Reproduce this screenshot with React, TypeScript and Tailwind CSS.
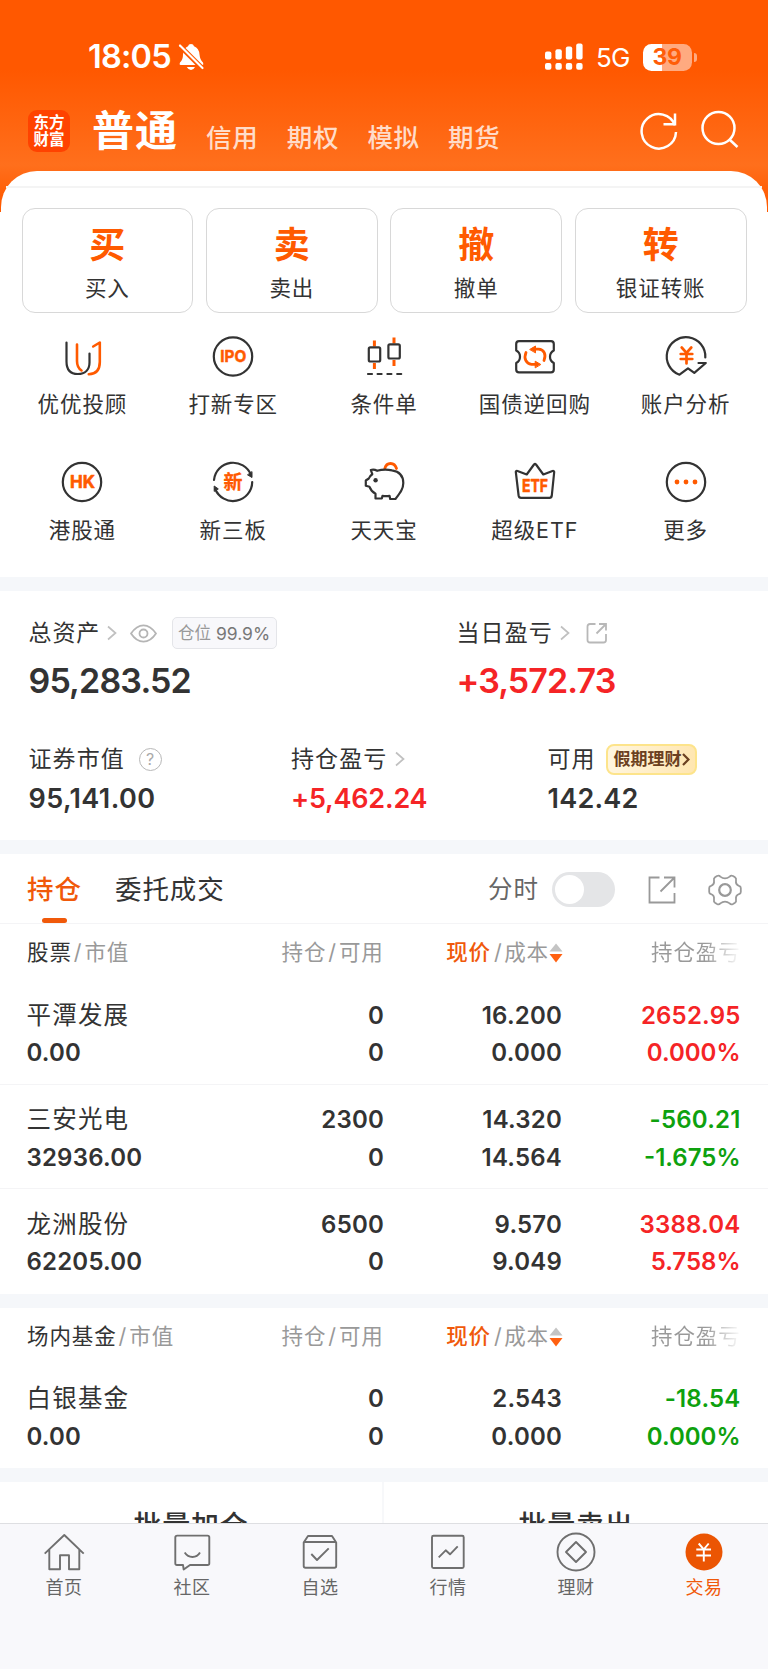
import type { ReactNode } from 'react';
import { clsx } from 'clsx';

const ACTIONS = [
  { mark: '买', name: '买入' },
  { mark: '卖', name: '卖出' },
  { mark: '撤', name: '撤单' },
  { mark: '转', name: '银证转账' },
];

const STOCKS = [
  { name: '平潭发展', value: '0.00', hold: '0', usable: '0', price: '16.200', cost: '0.000', profit: '2652.95', rate: '0.000%', up: true },
  { name: '三安光电', value: '32936.00', hold: '2300', usable: '0', price: '14.320', cost: '14.564', profit: '-560.21', rate: '-1.675%', up: false },
  { name: '龙洲股份', value: '62205.00', hold: '6500', usable: '0', price: '9.570', cost: '9.049', profit: '3388.04', rate: '5.758%', up: true },
];

const FUNDS = [
  { name: '白银基金', value: '0.00', hold: '0', usable: '0', price: '2.543', cost: '0.000', profit: '-18.54', rate: '0.000%', up: false },
];

type Holding = (typeof STOCKS)[number];

function Icon({ children }: { children: ReactNode }) {
  return (
    <svg className="shrink-0" width="48" height="48" viewBox="0 0 48 48" fill="none" stroke="#333" strokeWidth="2.2" strokeLinecap="round" strokeLinejoin="round">
      {children}
    </svg>
  );
}

const SHORTCUTS = [
  {
    name: '优优投顾',
    icon: (
      <Icon>
        <path d="M8.5 10.5V29.5C8.5 37.5 12.5 42 19.8 42S31.5 37.5 31.5 30.5V21.5" />
        <path stroke="#ff5a00" strokeWidth="2.6" d="M19 12.5V29C19 33.5 20.5 36.5 23.5 38.5M35.2 14.5L41.8 10.5V30C41.8 38 37.5 42 30.8 42.3" />
      </Icon>
    ),
  },
  {
    name: '打新专区',
    icon: (
      <Icon>
        <circle cx="24" cy="24.5" r="19.2" />
        <text x="24.2" y="30.4" fill="#ff5a00" stroke="#ff5a00" strokeWidth="0.5" fontSize="16.5" fontWeight="700" textAnchor="middle" textLength="26" lengthAdjust="spacingAndGlyphs">IPO</text>
      </Icon>
    ),
  },
  {
    name: '条件单',
    icon: (
      <Icon>
        <path stroke="#ff5a00" strokeWidth="3" strokeLinecap="butt" d="M14.4 8.5V14.5M14.4 31V37M34 5.5V11.5M34 28V34" />
        <rect x="8.8" y="15.3" width="11.4" height="14.2" rx="1.5" />
        <rect x="28.4" y="12.3" width="11.4" height="14.2" rx="1.5" />
        <path d="M8 42H12M17.6 42H21.6M27.4 42H31.4M37.2 42H41.2" />
      </Icon>
    ),
  },
  {
    name: '国债逆回购',
    icon: (
      <Icon>
        <path d="M8 9.2H40Q42.8 9.2 42.8 12V18.5Q39 20.5 39 24.7T42.8 31V37.5Q42.8 40.3 40 40.3H8Q5.2 40.3 5.2 37.5V31Q9 29 9 24.7T5.2 18.5V12Q5.2 9.2 8 9.2Z" />
        <path stroke="#ff5a00" strokeWidth="2.8" d="M15 20.5C12.5 26.5 15 31.800 20.500 32.300H26M33 28.500C35.500 22.500 33 17.500 27.500 17.200H22" />
        <path fill="#ff5a00" stroke="#ff5a00" strokeWidth="1" d="M19 17.300L24.500 14V20.500ZM29.500 32.300L24.200 29.200V35.500Z" />
      </Icon>
    ),
  },
  {
    name: '账户分析',
    icon: (
      <Icon>
        <path d="M43.300 25.500A19.300 19.300 0 1 0 17.500 42.700L26 36.300L32.300 40.800L43.800 31H36.500" />
        <path stroke="#ff5a00" strokeWidth="2.700" d="M19.700 15.500L24.500 20.800L29.300 15.500M18.700 22H30.300M18.700 27H30.300M24.500 21V31.500" />
      </Icon>
    ),
  },
  {
    name: '港股通',
    icon: (
      <Icon>
        <circle cx="24" cy="24" r="19.200" />
        <text x="24.500" y="30.300" fill="#ff5a00" stroke="#ff5a00" strokeWidth="0.600" fontSize="17.500" fontWeight="700" textAnchor="middle" textLength="25" lengthAdjust="spacingAndGlyphs">HK</text>
      </Icon>
    ),
  },
  {
    name: '新三板',
    icon: (
      <Icon>
        <path d="M5 22A19.200 19.200 0 0 1 42 17M43.200 24A19.200 19.200 0 0 1 6.200 31" />
        <path fill="#333" strokeWidth="1" d="M43 14V19.500L38.800 17ZM5.200 33V28L9 30.700Z" />
        <text x="24" y="30.500" fill="#ff5a00" stroke="#ff5a00" strokeWidth="0.300" fontSize="19" fontWeight="700" textAnchor="middle">新</text>
      </Icon>
    ),
  },
  {
    name: '天天宝',
    icon: (
      <Icon>
        <path stroke="#ff5a00" strokeWidth="2.800" d="M24.800 10.500C26.500 3.800 34.500 3.800 36.500 10.500" />
        <path d="M5.800 22.500L8.800 20.500Q9.500 18 12.300 16.200L10.800 12Q13.800 10.800 17.200 12.800Q24 10.800 32 12.300C39.500 13.500 43.300 18.500 43.300 25C43.300 31 40 35 35.500 41H30.200L29.500 37.800Q26 38.300 22.500 37.800L21.800 40.500H15.500V35.800Q11 33 9.500 28.800L5.800 27.800Z" />
        <circle cx="15.600" cy="22.200" r="2.200" fill="#333" stroke="none" />
      </Icon>
    ),
  },
  {
    name: '超级ETF',
    icon: (
      <Icon>
        <path d="M4.800 13.800Q5.200 12.500 6.500 13L15.700 16.500L23 6.500Q24 5.500 25 6.500L32.300 16.500L41.500 13Q43.200 12.700 43.200 14L40.800 37.500Q40.500 39.800 38.500 39.800H10Q8 39.800 7.600 37.500Z" />
        <text x="24" y="33.700" fill="#ff5a00" stroke="#ff5a00" strokeWidth="0.600" fontSize="17.500" fontWeight="700" textAnchor="middle" textLength="26" lengthAdjust="spacingAndGlyphs">ETF</text>
      </Icon>
    ),
  },
  {
    name: '更多',
    icon: (
      <Icon>
        <circle cx="24" cy="24" r="19.200" />
        <g fill="#ff5a00" stroke="none">
          <circle cx="15" cy="24" r="2.400" />
          <circle cx="24" cy="24" r="2.400" />
          <circle cx="33" cy="24" r="2.400" />
        </g>
      </Icon>
    ),
  },
];

const NAV = [
  { name: '首页', icon: <path d="M2.700 23.600L22.300 5L41.700 23.600M7.300 19.600V39.300H18V25.300H27V39.300H37.300V19.600" /> },
  { name: '社区', icon: <path d="M7.300 5.600H37.500Q39.300 5.600 39.300 7.400V33.200Q39.300 35 37.500 35H20L13.700 39.500L13 35H7Q5.300 35 5.300 33.200V7.400Q5.300 5.600 7.300 5.600ZM14.700 22.600C18.500 28.500 26.500 28.500 30 22.600" /> },
  { name: '自选', icon: <path d="M5.700 12.500L10 6H34L38.200 12.500V36Q38.200 37.700 36.500 37.700H7.500Q5.700 37.700 5.700 36ZM6 12H38M13.300 24L19 30L30.700 18.300" /> },
  { name: '行情', icon: <path d="M7.500 5.700H36.200Q37.700 5.700 37.700 7.200V36.500Q37.700 38 36.200 38H7.500Q6 38 6 36.500V7.200Q6 5.700 7.500 5.700ZM12.700 27.300L19.700 20.300L24 24.300L31.700 16.300" /> },
  { name: '理财', icon: <path d="M40.500 22A18.500 18.500 0 1 1 3.500 22A18.500 18.500 0 1 1 40.500 22ZM22 12L32 22L22 32L12 22Z" /> },
  {
    name: '交易',
    active: true,
    icon: (
      <>
        <circle cx="22" cy="22" r="18.500" fill="#eb5503" stroke="none" />
        <path stroke="#fff" d="M16.700 13.500L21.800 19.300L26.700 13.500M14.300 19.500H29M14.300 25.500H29M21.800 19.500V31.500" />
      </>
    ),
  },
];

function Chevron() {
  return (
    <svg width="10" height="16" viewBox="0 0 10 16" fill="none" stroke="#c0c0c0" strokeWidth="1.700">
      <path d="M1 1.500L8.500 8L1 14.500" />
    </svg>
  );
}

function StatusBar() {
  return (
    <div className="flex h-[58px] items-center">
      <span className="ml-[88px] w-[89px] whitespace-nowrap pt-px text-[32.500px] font-semibold leading-none tracking-[-0.800px]">18:05</span>
      <svg className="ml-px" width="27" height="28" viewBox="0 0 27 28">
        <path fill="#fff" d="M13 1Q15.500 1 16 3.200Q21 5 21.500 11.500Q22 17 25 19.500Q26 21.500 24.500 22H2.500Q0.800 21.500 2 19.500Q5 17 5 11.500Q5.500 5 10 3.200Q10.500 1 13 1ZM8.800 24H17Q15.500 27 13 27T8.800 24Z" />
        <path stroke="#ff5800" strokeWidth="5" d="M0 1L26 27" />
        <path stroke="#fff" strokeWidth="2.200" strokeLinecap="round" d="M2 2.500L24.500 25" />
      </svg>
      <svg className="ml-[340px]" width="38" height="28" viewBox="0 0 38 28" fill="#fff">
        <rect x="0" y="8.500" width="6.400" height="8" rx="2" />
        <rect x="10.400" y="6.300" width="6.400" height="10.200" rx="2" />
        <rect x="20.800" y="3.500" width="6.400" height="13" rx="2" />
        <rect x="31.200" y="0.500" width="6.400" height="16" rx="2" />
        <rect x="0" y="20" width="6.400" height="6.800" rx="2" />
        <rect x="10.400" y="20" width="6.400" height="6.800" rx="2" />
        <rect x="20.800" y="20" width="6.400" height="6.800" rx="2" />
        <rect x="31.200" y="20" width="6.400" height="6.800" rx="2" />
      </svg>
      <span className="ml-[13px] w-[35px] pt-[2px] text-[26px] leading-none tracking-[-0.700px]">5G</span>
      <div className="ml-[12px] flex h-[27px] w-[49px] items-center justify-center rounded-[8.500px] bg-[linear-gradient(90deg,#fff_39%,#ffaa80_39%)] pr-px text-[23px] font-bold leading-none tracking-[-0.500px] text-[#ff5d08]">
        39
      </div>
      <div className="ml-[2px] h-[9px] w-[3px] rounded-r-full bg-[#ffaa80]" />
    </div>
  );
}

function Header() {
  return (
    <header className="h-[212px] shrink-0 bg-[linear-gradient(180deg,#ff5800_0px,#ff5800_70px,#ff6f1c_165px,#ff5a00_203px)] pt-[28px] text-white">
      <StatusBar />
      <div className="flex h-[86px] items-center">
        <div className="relative top-[2px] ml-[28px] flex h-[42px] w-[42px] flex-col justify-center rounded-[9px] bg-[#ff4200] text-center text-[15.500px] font-bold leading-[17px]">
          <span>东方</span>
          <span>财富</span>
        </div>
        <span className="ml-[22px] w-[88px] whitespace-nowrap pt-[3px] text-[42px] font-bold leading-none tracking-[1px]">普通</span>
        <div className="ml-[26px] flex gap-[28.300px] pt-[17px] text-[25.500px] font-medium leading-none tracking-[0.700px] text-[#ffdcc9]">
          <span>信用</span>
          <span>期权</span>
          <span>模拟</span>
          <span>期货</span>
        </div>
        <svg className="ml-auto mr-[28px]" width="102" height="44" viewBox="0 0 102 44" fill="none" stroke="#fff" strokeWidth="2.500">
          <path d="M37 18.500A17.200 17.200 0 1 0 38 25M37 6.500V17.200H25.500" />
          <circle cx="80.500" cy="21" r="16" />
          <path d="M92 33L99.500 40" />
        </svg>
      </div>
    </header>
  );
}

function TableHead({ title }: { title: string }) {
  return (
    <div className="grid h-[56px] shrink-0 grid-cols-[180px_176px_207px_1fr] items-center pr-[27px] pt-[2px] text-[21.500px] leading-none tracking-[0.900px] text-[#999]">
      <div className="whitespace-nowrap pl-[27px]">
        <span className="text-[#333]">{title}</span>
        <span className="mx-[2px]">/</span>市值
      </div>
      <div className="whitespace-nowrap pl-[101.500px]">持仓<span className="mx-[2px]">/</span>可用</div>
      <div className="flex items-center justify-end whitespace-nowrap">
        <span className="font-medium text-[#f0590a]">现价</span>
        <span className="ml-[3px] mr-[1.500px]">/</span>成本
        <svg width="14" height="20" viewBox="0 0 14 20">
          <path fill="#c4c4c4" d="M7 0.500L13.500 8.500H0.500Z" />
          <path fill="#ff6010" d="M7 19.500L0.500 11H13.500Z" />
        </svg>
      </div>
      <div className="ml-auto w-[90px] overflow-hidden whitespace-nowrap bg-[linear-gradient(90deg,#999_60%,#99999910_98%)] bg-clip-text py-1 text-transparent">持仓盈亏</div>
    </div>
  );
}

function Row({ item, last }: { item: Holding; last: boolean }) {
  return (
    <div className={clsx('grid h-[104.500px] shrink-0 grid-cols-[200px_184px_178px_1fr] pr-[27.500px] pt-[16.500px] text-right text-[24px] font-semibold leading-[37.500px] tracking-[0.200px] text-[#333]', !last && 'border-b border-[#f4f4f6]')}>
      <div className="pl-[26.500px] text-left">
        <div className="text-[24.500px] font-normal tracking-[1.200px]">{item.name}</div>
        <div>{item.value}</div>
      </div>
      <div>
        <div>{item.hold}</div>
        <div>{item.usable}</div>
      </div>
      <div>
        <div>{item.price}</div>
        <div>{item.cost}</div>
      </div>
      <div className={item.up ? 'text-[#f52426]' : 'text-[#0ea10e]'}>
        <div>{item.profit}</div>
        <div className="tracking-normal">{item.rate}</div>
      </div>
    </div>
  );
}

function Assets() {
  return (
    <section className="h-[249px] shrink-0 whitespace-nowrap pl-[28.500px] text-[#333]">
      <div className="grid h-[117px] grid-cols-[428px_1fr] pt-[24px]">
        <div>
          <div className="flex h-[36px] items-center text-[23px] leading-none tracking-[0.900px]">
            <span className="w-[78px]">总资产</span>
            <Chevron />
            <svg className="ml-[13px]" width="27" height="19" viewBox="0 0 27 19" fill="none" stroke="#b5b5b5" strokeWidth="1.800">
              <path d="M1 9.500Q6.500 1.300 13.500 1.300T26 9.500Q20.500 17.700 13.500 17.700T1 9.500Z" />
              <circle cx="13.500" cy="9.500" r="4" />
            </svg>
            <div className="ml-[15px] flex h-[32px] w-[105px] items-center justify-center gap-[5px] rounded-[5px] border border-[#e4e5e9] bg-[#f8f8fb] pt-px text-[17.500px] tracking-normal">
              <span className="text-[16.500px] text-[#999]">仓位</span>
              <span className="text-[#777]">99.9%</span>
            </div>
          </div>
          <div className="mt-[11px] text-[34px] font-semibold leading-[38px] tracking-[-0.850px]">95,283.52</div>
        </div>
        <div>
          <div className="flex h-[36px] items-center text-[23px] leading-none tracking-[1.100px]">
            <span className="w-[103px]">当日盈亏</span>
            <Chevron />
            <svg className="ml-[16px]" width="22" height="22" viewBox="0 0 22 22" fill="none" stroke="#b8b8b8" strokeWidth="1.800">
              <path d="M9.500 2H4Q1.500 2 1.500 4.500V18Q1.500 20.500 4 20.500H17.500Q20 20.500 20 18V12M13 2H20V8.500M20 2L10.500 11.500" />
            </svg>
          </div>
          <div className="mt-[11px] text-[34px] font-semibold leading-[38px] tracking-[-0.900px] text-[#f52426]">+3,572.73</div>
        </div>
      </div>
      <div className="grid grid-cols-[262.500px_256.500px_1fr] pt-[33px] text-[23px] leading-none tracking-[1.100px]">
        <div>
          <div className="flex h-[36px] items-center">
            <span className="w-[110px]">证券市值</span>
            <span className="flex h-[23px] w-[23px] items-center justify-center rounded-full border-[1.500px] border-[#b8b8b8] text-[16px] tracking-normal text-[#aaa]">?</span>
          </div>
          <div className="mt-[5.500px] text-[27px] font-semibold leading-[32px] tracking-[0.400px]">95,141.00</div>
        </div>
        <div>
          <div className="flex h-[36px] items-center">
            <span className="w-[103.500px]">持仓盈亏</span>
            <Chevron />
          </div>
          <div className="mt-[5.500px] text-[27px] font-semibold leading-[32px] tracking-[-0.200px] text-[#f52426]">+5,462.24</div>
        </div>
        <div>
          <div className="flex h-[36px] items-center">
            <span className="w-[58.500px]">可用</span>
            <div className="flex h-[31px] w-[91px] items-center justify-center rounded-[8px] border-2 border-[#fde48b] bg-[linear-gradient(100deg,#fff6e0,#ffe6b0)] text-[17px] font-bold tracking-normal text-[#6b4020]">
              假期理财
              <svg width="8" height="13" viewBox="0 0 8 13" fill="none" stroke="#6b4020" strokeWidth="2.200">
                <path d="M1 1L6.500 6.500L1 12" />
              </svg>
            </div>
          </div>
          <div className="mt-[5.500px] text-[27px] font-semibold leading-[32px] tracking-[0.250px]">142.42</div>
        </div>
      </div>
    </section>
  );
}

export default function App() {
  return (
    <div className="flex h-[1669px] w-[768px] flex-col overflow-hidden bg-white font-[Inter,'Noto_Sans_CJK_SC',sans-serif] text-[#333]">
      <Header />

      <section className="relative mx-px -mt-[41px] h-[406px] shrink-0 rounded-t-[36px] bg-white pt-[15px]">
        <div className="mx-[5px] h-[2px] bg-[#f4f4f4]" />
        <div className="grid grid-cols-4 gap-[12.700px] px-[20.500px] pt-[20px]">
          {ACTIONS.map((action) => (
            <button key={action.mark} className="flex h-[105px] flex-col items-center rounded-[13px] border border-[#d8d8d8] pt-[17.500px] leading-none">
              <span className="text-[36px] font-bold leading-[36px] text-[#ff5a00]">{action.mark}</span>
              <span className="mt-[13px] text-[21.500px] leading-[24px] tracking-[0.900px]">{action.name}</span>
            </button>
          ))}
        </div>
        <div className="grid grid-cols-5 gap-y-[41px] px-[6px] pt-[19px]">
          {SHORTCUTS.map((item) => (
            <div key={item.name} className="flex h-[85px] flex-col items-center whitespace-nowrap">
              {item.icon}
              <span className="mt-[12px] text-[21.500px] leading-[24px] tracking-[0.900px]">{item.name}</span>
            </div>
          ))}
        </div>
      </section>

      <div className="h-[14px] shrink-0 bg-[#f5f7fa]" />
      <Assets />
      <div className="h-[14px] shrink-0 bg-[#f5f7fa]" />

      {/* Holdings tabs */}
      <div className="flex h-[70px] shrink-0 items-center border-b border-[#f4f4f6] pl-[27px] pt-[2px] text-[26.500px] leading-none tracking-[0.900px]">
        <div className="relative flex h-full w-[88px] items-center font-medium text-[#f0590a]">
          持仓
          <div className="absolute bottom-0 left-[15px] h-[5px] w-[25px] rounded-full bg-[#f0590a]" />
        </div>
        <span className="w-[373px]">委托成交</span>
        <span className="w-[64px] text-[24.500px] text-[#666]">分时</span>
        <div className="flex h-[35px] w-[63px] items-center rounded-full bg-[#e4e5e7] pl-[3px]">
          <div className="h-[29px] w-[29px] rounded-full bg-white" />
        </div>
        <svg className="ml-[32px]" width="30" height="30" viewBox="0 0 30 30" fill="none" stroke="#999" strokeWidth="1.800">
          <path d="M12.500 2.500H2.500V27.500H27.500V18M17 2.500H27.500V12.500M27 3L13.500 16.500" />
        </svg>
        <svg className="ml-[31px]" width="34" height="34" viewBox="0 0 34 34" fill="none" stroke="#999" strokeWidth="1.800" strokeLinejoin="round">
          <path d="M9 3Q11 2 12.300 3.600Q17 7.200 21.700 3.600Q23 2 25 3L27 4.200Q28.500 5.200 28 7.500C27.600 10.500 28.500 12 31 12.800Q32.800 13.300 32.800 15V19Q32.800 20.700 31 21.200C28.500 22 27.600 23.500 28 26.500Q28.500 28.800 27 29.800L25 31Q23 32 21.700 30.400Q17 26.800 12.300 30.400Q11 32 9 31L7 29.800Q5.500 28.800 6 26.500C6.400 23.500 5.500 22 3 21.200Q1.200 20.700 1.200 19V15Q1.200 13.300 3 12.800C5.500 12 6.400 10.500 6 7.500Q5.500 5.200 7 4.200Z" />
          <circle cx="17" cy="17" r="5.800" strokeWidth="2.200" />
        </svg>
      </div>

      <TableHead title="股票" />
      {STOCKS.map((item, i) => (
        <Row key={item.name} item={item} last={i === STOCKS.length - 1} />
      ))}
      <div className="h-[14px] shrink-0 bg-[#f5f7fa]" />
      <TableHead title="场内基金" />
      {FUNDS.map((item) => (
        <Row key={item.name} item={item} last />
      ))}
      <div className="h-[14px] shrink-0 bg-[#f5f7fa]" />

      {/* Batch actions scroll under the tab bar */}
      <div className="grid h-[41px] shrink-0 grid-cols-2 overflow-hidden text-center text-[28px] font-medium leading-[30px] tracking-[0.700px]">
        <div className="border-r-2 border-[#f7f8fa] pt-[29px]">批量加仓</div>
        <div className="pt-[29px]">批量卖出</div>
      </div>

      <nav className="grid h-[146px] shrink-0 grid-cols-6 border-t border-[#dedfe2] bg-[#f8f8fb] pt-[6px]">
        {NAV.map((item) => (
          <div key={item.name} className={clsx('flex flex-col items-center', item.active ? 'text-[#f0590a]' : 'text-[#666]')}>
            <svg width="44" height="44" viewBox="0 0 44 44" fill="none" stroke="#6f6f6f" strokeWidth="1.900" strokeLinejoin="round">
              {item.icon}
            </svg>
            <span className="mt-[3px] text-[18px] leading-[22px] tracking-[0.500px]">{item.name}</span>
          </div>
        ))}
      </nav>
    </div>
  );
}
